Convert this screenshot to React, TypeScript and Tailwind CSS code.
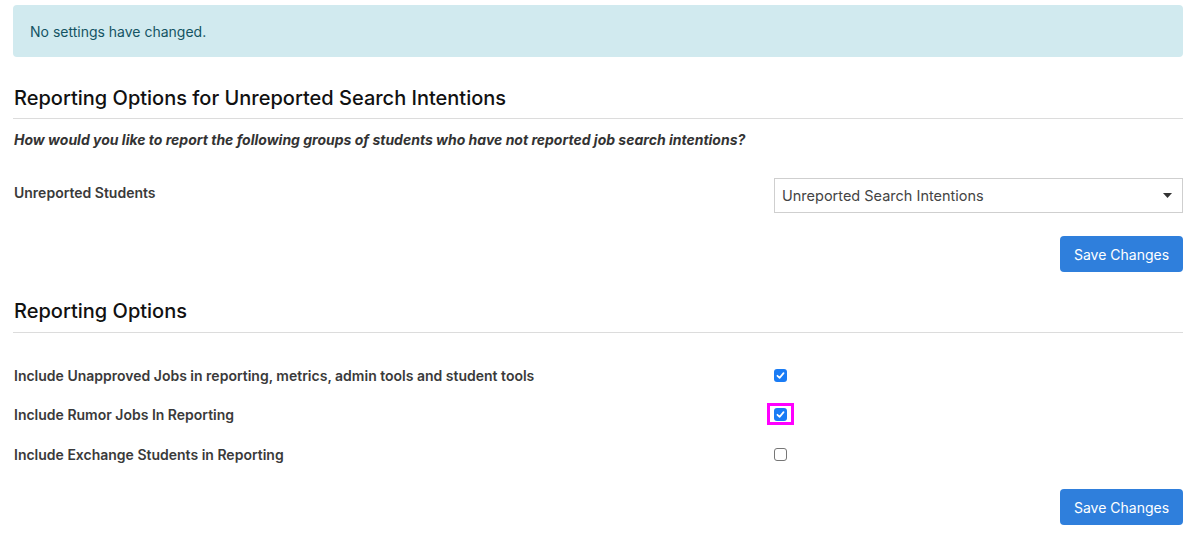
import React from "react";

function Check({ checked, focus }: { checked: boolean; focus?: boolean }) {
  return (
    <span className="relative inline-flex">
      {checked ? (
        <span className="flex h-[13px] w-[13px] items-center justify-center rounded-[3px] bg-[#1a7cf5]">
          <svg width="9" height="9" viewBox="0 0 10 10">
            <path d="M1.6 5.3 L4 7.6 L8.4 2.4" fill="none" stroke="#fff" strokeWidth="1.9" strokeLinecap="round" strokeLinejoin="round" />
          </svg>
        </span>
      ) : (
        <span className="block h-[13px] w-[13px] rounded-[3px] border border-[#767676] bg-white" />
      )}
      {focus && (
        <span className="absolute left-[-7px] top-[-5px] h-[22px] w-[27px] border-[3px] border-[#ff00ff]" />
      )}
    </span>
  );
}

function SaveButton() {
  return (
    <div className="flex justify-end">
      <button className="h-[36px] w-[123px] rounded-[4px] bg-[#2f7fdc] text-[14px] text-white">
        Save Changes
      </button>
    </div>
  );
}

export default function App() {
  return (
    <div
      className="min-h-[542px] bg-white pl-[13px] pr-[21px] pt-[5px] text-[14px]"
      style={{ fontFamily: "Inter, 'Noto Sans', sans-serif" }}
    >
      <div className="flex h-[52px] items-center rounded-[4px] bg-[#d1eaef] pl-[17px] text-[14px] text-[#145463]">
        No settings have changed.
      </div>

      <h2 className="mt-[28px] pl-[1px] text-[20px] font-medium leading-[26px] text-[#111]">
        Reporting Options for Unreported Search Intentions
      </h2>
      <div className="mt-[7px] h-px bg-[#dcdcdc]" />
      <p className="mt-[11px] pl-[1px] text-[14px] font-bold italic leading-[20px] text-[#333]">
        How would you like to report the following groups of students who have not reported job search intentions?
      </p>

      <div className="mt-[28px] flex items-start">
        <div className="w-[761px] pl-[1px] pt-[4px] text-[14px] font-semibold text-[#3a3a3a]">
          Unreported Students
        </div>
        <div className="flex h-[35px] flex-1 items-center justify-between border border-[#cfcfcf] bg-white pl-[7px] pr-[10px] text-[14.5px] text-[#444]">
          <span>Unreported Search Intentions</span>
          <svg width="9" height="5" viewBox="0 0 9 5">
            <path d="M0 0 H9 L4.5 5 Z" fill="#333" />
          </svg>
        </div>
      </div>

      <div className="mt-[23px]">
        <SaveButton />
      </div>

      <h2 className="mt-[26px] pl-[1px] text-[20px] font-medium leading-[26px] text-[#111]">
        Reporting Options
      </h2>
      <div className="mt-[8px] h-px bg-[#dcdcdc]" />

      <div className="mt-[32px] flex flex-col gap-[19.5px]">
        {[
          { label: "Include Unapproved Jobs in reporting, metrics, admin tools and student tools", checked: true },
          { label: "Include Rumor Jobs In Reporting", checked: true, focus: true },
          { label: "Include Exchange Students in Reporting", checked: false },
        ].map((r) => (
          <div key={r.label} className="flex h-[20px] items-center">
            <div className="w-[761px] pl-[1px] text-[14px] font-semibold text-[#3a3a3a]">{r.label}</div>
            <Check checked={r.checked} focus={r.focus} />
          </div>
        ))}
      </div>

      <div className="mt-[25px]">
        <SaveButton />
      </div>
    </div>
  );
}
